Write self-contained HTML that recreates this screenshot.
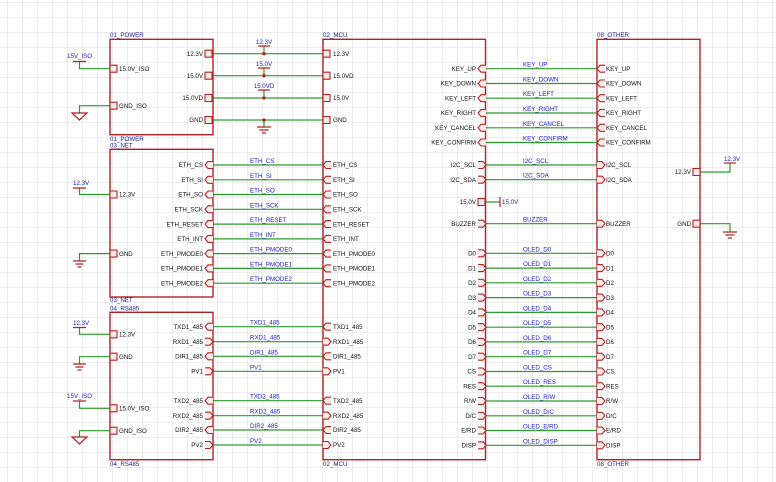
<!DOCTYPE html>
<html><head><meta charset="utf-8"><style>
html,body{margin:0;padding:0;background:#fff;width:776px;height:482px;overflow:hidden}
svg{display:block}
text{font-family:"Liberation Sans",sans-serif;font-size:6.2px}
.k{fill:#111}
.b{fill:#1a1acc}
.n{fill:#1a1a9a}
.e{text-anchor:end}
.m{text-anchor:middle}
</style></head><body>
<svg width="776" height="482" viewBox="0 0 776 482" xmlns="http://www.w3.org/2000/svg">
<defs>
<pattern id="g" x="7" y="2" width="15" height="15" patternUnits="userSpaceOnUse">
<path d="M0,0V15M0,0H15" stroke="#e2e2e2" stroke-width="1.3" fill="none"/>
</pattern>
<path id="sq" d="M0,-3.5H7V3.5H0Z" fill="#fbeaea" stroke="#b22222" stroke-width="1.1"/>
<path id="iL" d="M8,-3.5H3L0,0L3,3.5H8" fill="#fbeaea" stroke="#b22222" stroke-width="1.1"/>
<path id="oR" d="M0,-3.5H5L8,0L5,3.5H0" fill="#fbeaea" stroke="#b22222" stroke-width="1.1"/>
</defs>
<rect width="776" height="482" fill="url(#g)"/>

<!-- wires -->
<g stroke="#2c9a2c" stroke-width="1.2" fill="none">
<path d="M213,53.7H323M213,75.7H323M213,98H323M213,120H323"/>
<path d="M264,46V53.7M264,68V75.7M264,90V98M264,120V127"/>
<path d="M213,165H323M213,179.8H323M213,194.5H323M213,209.3H323M213,224.1H323M213,238.9H323M213,253.6H323M213,268.4H323M213,283.2H323"/>
<path d="M213,326.7H323M213,341.7H323M213,356.3H323M213,371.3H323M213,400.7H323M213,415.7H323M213,430H323M213,445H323"/>
<path d="M486,68.7H597M486,83.5H597M486,98.2H597M486,113H597M486,127.8H597M486,142.5H597M486,165H597M486,179.7H597M486,202H500M486,223.7H597"/>
<path d="M486,253.3H597M486,268.1H597M486,282.8H597M486,297.6H597M486,312.4H597M486,327.2H597M486,341.9H597M486,356.7H597M486,371.5H597M486,386.2H597M486,401H597M486,415.8H597M486,430.5H597M486,445.3H597"/>
<path d="M700,172H730V163M700,223.7H730V232"/>
<path d="M79.5,61.5V68.7H110M110,105.7H79.5V113"/>
<path d="M79.5,188V194.5H110M110,253.6H79.5V261"/>
<path d="M79.5,327.5V334.3H110M110,356.7H79.5V364"/>
<path d="M79.5,401V408.3H110M110,430.7H79.5V437"/>
</g>

<!-- power/ground symbols -->
<g stroke="#b22222" stroke-width="1.2" fill="none">
<path d="M258,46H270M258,68H270M258,90H270"/>
<path d="M257,127H271M259.5,130H268.5M262,133H266"/>
<path d="M73,61.5H86M73,188H86M73,327.5H86M73,401H86"/>
<path d="M72,113H87L79.5,120Z M72,437H87L79.5,444Z"/>
<path d="M73,261H86M75.5,264H83.5M77.5,267H81.5"/>
<path d="M73,364H86M75.5,367H83.5M77.5,370H81.5"/>
<path d="M500,197V207"/>
<path d="M724,163H736"/>
<path d="M723,232H737M725.5,235H734.5M728,238H732"/>
</g>
<g fill="#c01010">
<circle cx="264" cy="53.7" r="1.6"/><circle cx="264" cy="75.7" r="1.6"/><circle cx="264" cy="98" r="1.6"/><circle cx="264" cy="120" r="1.6"/>
</g>

<!-- boxes -->
<g stroke="#b22222" stroke-width="1.4" fill="none">
<rect x="110" y="39.3" width="103" height="95.4"/>
<rect x="110" y="149.3" width="103" height="147.7"/>
<rect x="110" y="312.3" width="103" height="147.4"/>
<rect x="323" y="39.3" width="162.5" height="420.4"/>
<rect x="597" y="39.3" width="103" height="420.4"/>
</g>

<!-- box labels -->
<g class="n">
<text x="110" y="37">01_POWER</text><text x="110" y="141">01_POWER</text>
<text x="110" y="147.5">03_NET</text><text x="110" y="302">03_NET</text>
<text x="110" y="310.5">04_RS485</text><text x="110" y="466">04_RS485</text>
<text x="323" y="37">02_MCU</text><text x="323" y="466">02_MCU</text>
<text x="597" y="37">08_OTHER</text><text x="597" y="466">08_OTHER</text>
</g>

<!-- pins -->
<use href="#sq" x="205" y="53.7"/><use href="#sq" x="205" y="75.7"/><use href="#sq" x="205" y="98"/><use href="#sq" x="205" y="120"/>
<use href="#sq" x="323" y="53.7"/><use href="#sq" x="323" y="75.7"/><use href="#sq" x="323" y="98"/><use href="#sq" x="323" y="120"/>
<use href="#sq" x="110" y="68.7"/><use href="#sq" x="110" y="105.7"/>
<use href="#sq" x="110" y="194.5"/><use href="#sq" x="110" y="253.6"/>
<use href="#sq" x="110" y="334.3"/><use href="#sq" x="110" y="356.7"/><use href="#sq" x="110" y="408.3"/><use href="#sq" x="110" y="430.7"/>
<use href="#iL" x="205" y="165"/><use href="#iL" x="205" y="179.8"/><use href="#iL" x="205" y="194.5"/><use href="#iL" x="205" y="209.3"/><use href="#iL" x="205" y="224.1"/><use href="#iL" x="205" y="238.9"/><use href="#iL" x="205" y="253.6"/><use href="#iL" x="205" y="268.4"/><use href="#iL" x="205" y="283.2"/>
<use href="#iL" x="323" y="165"/><use href="#iL" x="323" y="179.8"/><use href="#iL" x="323" y="194.5"/><use href="#iL" x="323" y="209.3"/><use href="#iL" x="323" y="224.1"/><use href="#iL" x="323" y="238.9"/><use href="#iL" x="323" y="253.6"/><use href="#iL" x="323" y="268.4"/><use href="#iL" x="323" y="283.2"/>
<use href="#iL" x="205" y="326.7"/><use href="#oR" x="205" y="341.7"/><use href="#iL" x="205" y="356.3"/><use href="#oR" x="205" y="371.3"/>
<use href="#iL" x="205" y="400.7"/><use href="#oR" x="205" y="415.7"/><use href="#iL" x="205" y="430"/><use href="#oR" x="205" y="445"/>
<use href="#iL" x="323" y="326.7"/><use href="#oR" x="323" y="341.7"/><use href="#iL" x="323" y="356.3"/><use href="#oR" x="323" y="371.3"/>
<use href="#iL" x="323" y="400.7"/><use href="#oR" x="323" y="415.7"/><use href="#iL" x="323" y="430"/><use href="#oR" x="323" y="445"/>
<use href="#iL" x="478" y="68.7"/><use href="#iL" x="478" y="83.5"/><use href="#iL" x="478" y="98.2"/><use href="#iL" x="478" y="113"/><use href="#iL" x="478" y="127.8"/><use href="#iL" x="478" y="142.5"/>
<use href="#iL" x="597" y="68.7"/><use href="#iL" x="597" y="83.5"/><use href="#iL" x="597" y="98.2"/><use href="#iL" x="597" y="113"/><use href="#iL" x="597" y="127.8"/><use href="#iL" x="597" y="142.5"/>
<use href="#oR" x="478" y="165"/><use href="#oR" x="478" y="179.7"/><use href="#sq" x="478" y="202"/><use href="#oR" x="478" y="223.7"/>
<use href="#oR" x="597" y="165"/><use href="#oR" x="597" y="179.7"/><use href="#oR" x="597" y="223.7"/>
<use href="#oR" x="478" y="253.3"/><use href="#oR" x="478" y="268.1"/><use href="#oR" x="478" y="282.8"/><use href="#oR" x="478" y="297.6"/><use href="#oR" x="478" y="312.4"/><use href="#oR" x="478" y="327.2"/><use href="#oR" x="478" y="341.9"/><use href="#oR" x="478" y="356.7"/><use href="#oR" x="478" y="371.5"/><use href="#oR" x="478" y="386.2"/><use href="#oR" x="478" y="401"/><use href="#oR" x="478" y="415.8"/><use href="#oR" x="478" y="430.5"/><use href="#oR" x="478" y="445.3"/>
<use href="#oR" x="597" y="253.3"/><use href="#oR" x="597" y="268.1"/><use href="#oR" x="597" y="282.8"/><use href="#oR" x="597" y="297.6"/><use href="#oR" x="597" y="312.4"/><use href="#oR" x="597" y="327.2"/><use href="#oR" x="597" y="341.9"/><use href="#oR" x="597" y="356.7"/><use href="#oR" x="597" y="371.5"/><use href="#oR" x="597" y="386.2"/><use href="#oR" x="597" y="401"/><use href="#oR" x="597" y="415.8"/><use href="#oR" x="597" y="430.5"/><use href="#oR" x="597" y="445.3"/>
<use href="#sq" x="693" y="172"/><use href="#sq" x="693" y="223.7"/>

<!-- pin names -->
<g class="k e">
<text x="203" y="55.9">12.3V</text><text x="203" y="77.9">15.0V</text><text x="203" y="100.2">15.0VD</text><text x="203" y="122.2">GND</text>
<text x="203" y="167.2">ETH_CS</text><text x="203" y="182">ETH_SI</text><text x="203" y="196.7">ETH_SO</text><text x="203" y="211.5">ETH_SCK</text><text x="203" y="226.3">ETH_RESET</text><text x="203" y="241.1">ETH_INT</text><text x="203" y="255.8">ETH_PMODE0</text><text x="203" y="270.6">ETH_PMODE1</text><text x="203" y="285.4">ETH_PMODE2</text>
<text x="203" y="328.9">TXD1_485</text><text x="203" y="343.9">RXD1_485</text><text x="203" y="358.5">DIR1_485</text><text x="203" y="373.5">PV1</text>
<text x="203" y="402.9">TXD2_485</text><text x="203" y="417.9">RXD2_485</text><text x="203" y="432.2">DIR2_485</text><text x="203" y="447.2">PV2</text>
<text x="476" y="70.9">KEY_UP</text><text x="476" y="85.7">KEY_DOWN</text><text x="476" y="100.4">KEY_LEFT</text><text x="476" y="115.2">KEY_RIGHT</text><text x="476" y="130">KEY_CANCEL</text><text x="476" y="144.7">KEY_CONFIRM</text>
<text x="476" y="167.2">I2C_SCL</text><text x="476" y="181.9">I2C_SDA</text><text x="476" y="204.2">15.0V</text><text x="476" y="225.9">BUZZER</text>
<text x="476" y="255.5">D0</text><text x="476" y="270.3">D1</text><text x="476" y="285">D2</text><text x="476" y="299.8">D3</text><text x="476" y="314.6">D4</text><text x="476" y="329.4">D5</text><text x="476" y="344.1">D6</text><text x="476" y="358.9">D7</text><text x="476" y="373.7">CS</text><text x="476" y="388.4">RES</text><text x="476" y="403.2">R/W</text><text x="476" y="418">D/C</text><text x="476" y="432.7">E/RD</text><text x="476" y="447.5">DISP</text>
<text x="691" y="174.2">12.3V</text><text x="691" y="225.9">GND</text>
</g>
<g class="k">
<text x="119" y="70.9">15.0V_ISO</text><text x="119" y="107.9">GND_ISO</text>
<text x="119" y="196.7">12.3V</text><text x="119" y="255.8">GND</text>
<text x="119" y="336.5">12.3V</text><text x="119" y="358.9">GND</text><text x="119" y="410.5">15.0V_ISO</text><text x="119" y="432.9">GND_ISO</text>
<text x="333" y="55.9">12.3V</text><text x="333" y="77.9">15.0VD</text><text x="333" y="100.2">15.0V</text><text x="333" y="122.2">GND</text>
<text x="333" y="167.2">ETH_CS</text><text x="333" y="182">ETH_SI</text><text x="333" y="196.7">ETH_SO</text><text x="333" y="211.5">ETH_SCK</text><text x="333" y="226.3">ETH_RESET</text><text x="333" y="241.1">ETH_INT</text><text x="333" y="255.8">ETH_PMODE0</text><text x="333" y="270.6">ETH_PMODE1</text><text x="333" y="285.4">ETH_PMODE2</text>
<text x="333" y="328.9">TXD1_485</text><text x="333" y="343.9">RXD1_485</text><text x="333" y="358.5">DIR1_485</text><text x="333" y="373.5">PV1</text>
<text x="333" y="402.9">TXD2_485</text><text x="333" y="417.9">RXD2_485</text><text x="333" y="432.2">DIR2_485</text><text x="333" y="447.2">PV2</text>
<text x="606" y="70.9">KEY_UP</text><text x="606" y="85.7">KEY_DOWN</text><text x="606" y="100.4">KEY_LEFT</text><text x="606" y="115.2">KEY_RIGHT</text><text x="606" y="130">KEY_CANCEL</text><text x="606" y="144.7">KEY_CONFIRM</text>
<text x="606" y="167.2">I2C_SCL</text><text x="606" y="181.9">I2C_SDA</text><text x="606" y="225.9">BUZZER</text>
<text x="606" y="255.5">D0</text><text x="606" y="270.3">D1</text><text x="606" y="285">D2</text><text x="606" y="299.8">D3</text><text x="606" y="314.6">D4</text><text x="606" y="329.4">D5</text><text x="606" y="344.1">D6</text><text x="606" y="358.9">D7</text><text x="606" y="373.7">CS</text><text x="606" y="388.4">RES</text><text x="606" y="403.2">R/W</text><text x="606" y="418">D/C</text><text x="606" y="432.7">E/RD</text><text x="606" y="447.5">DISP</text>
</g>

<!-- net labels -->
<g class="b" font-size="5.8">
<text class="m" x="264" y="44">12.3V</text><text class="m" x="264" y="66">15.0V</text><text class="m" x="264" y="88">15.0VD</text>
<text x="67" y="58">15V_ISO</text><text x="73" y="185">12.3V</text><text x="73" y="325">12.3V</text><text x="67" y="398">15V_ISO</text>
<text x="502" y="204">15.0V</text><text x="724" y="161">12.3V</text>
<text x="250" y="163">ETH_CS</text><text x="250" y="177.8">ETH_SI</text><text x="250" y="192.5">ETH_SO</text><text x="250" y="207.3">ETH_SCK</text><text x="250" y="222.1">ETH_RESET</text><text x="250" y="236.9">ETH_INT</text><text x="250" y="251.6">ETH_PMODE0</text><text x="250" y="266.4">ETH_PMODE1</text><text x="250" y="281.2">ETH_PMODE2</text>
<text x="250" y="324.7">TXD1_485</text><text x="250" y="339.7">RXD1_485</text><text x="250" y="354.3">DIR1_485</text><text x="250" y="369.3">PV1</text>
<text x="250" y="398.7">TXD2_485</text><text x="250" y="413.7">RXD2_485</text><text x="250" y="428">DIR2_485</text><text x="250" y="443">PV2</text>
<text x="523" y="66.7">KEY_UP</text><text x="523" y="81.5">KEY_DOWN</text><text x="523" y="96.2">KEY_LEFT</text><text x="523" y="111">KEY_RIGHT</text><text x="523" y="125.8">KEY_CANCEL</text><text x="523" y="140.5">KEY_CONFIRM</text>
<text x="523" y="163">I2C_SCL</text><text x="523" y="177.7">I2C_SDA</text><text x="523" y="221.7">BUZZER</text>
<text x="523" y="251.3">OLED_D0</text><text x="523" y="266.1">OLED_D1</text><text x="523" y="280.8">OLED_D2</text><text x="523" y="295.6">OLED_D3</text><text x="523" y="310.4">OLED_D4</text><text x="523" y="325.2">OLED_D5</text><text x="523" y="339.9">OLED_D6</text><text x="523" y="354.7">OLED_D7</text><text x="523" y="369.5">OLED_CS</text><text x="523" y="384.2">OLED_RES</text><text x="523" y="399">OLED_R/W</text><text x="523" y="413.8">OLED_D/C</text><text x="523" y="428.5">OLED_E/RD</text><text x="523" y="443.3">OLED_DISP</text>
</g>
</svg>
</body></html>
